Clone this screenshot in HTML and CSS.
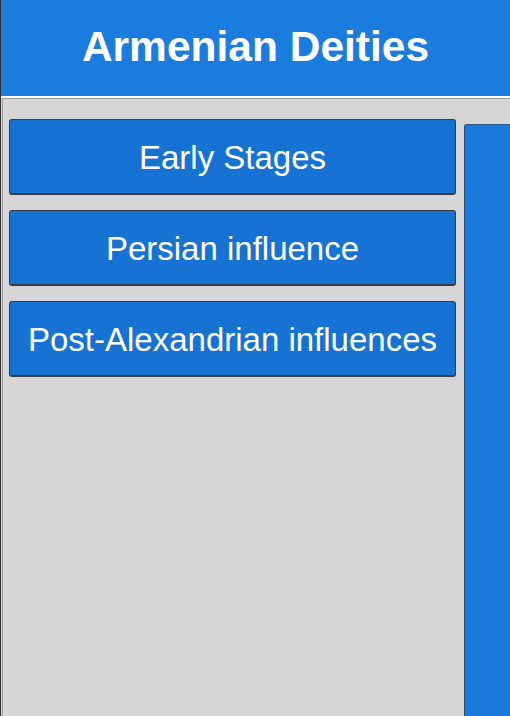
FILE: index.html
```html
<!DOCTYPE html>
<html>
<head>
<meta charset="utf-8">
<link rel="stylesheet" href="styles.css">
</head>
<body>
<div class="app">
  <header class="header"><h1 class="title">Armenian Deities</h1></header>
  <div class="sep"></div>
  <main class="panel">
    <nav class="menu">
      <button class="btn">Early Stages</button>
      <button class="btn">Persian influence</button>
      <button class="btn">Post-Alexandrian influences</button>
    </nav>
    <section class="content"></section>
  </main>
</div>
</body>
</html>
```
FILE: styles.css
```css
html, body { margin: 0; padding: 0; }
body { width: 510px; height: 716px; overflow: hidden; background: #d6d6d6; font-family: "Liberation Sans", Arial, sans-serif; }
.app { display: flex; flex-direction: column; height: 716px; border-left: 1px solid #2e2e2e; box-sizing: border-box; }
.header { height: 96px; background: #1a7cde; display: flex; align-items: center; justify-content: center; flex-shrink: 0; }
.title { margin: 0; color: #fff; font-size: 42.5px; font-weight: bold; line-height: 1; padding-bottom: 2px; }
.sep { height: 2px; background: #fff; flex-shrink: 0; }
.panel { flex: 1; display: flex; gap: 8px; background: #d6d6d6; border-top: 1px solid #9c9c9c; border-left: 1px solid #a0a0a0; margin-left: 1px; padding: 20px 0 0 6px; min-height: 0; }
.menu { width: 447px; display: flex; flex-direction: column; gap: 15px; flex-shrink: 0; }
.btn { height: 76px; background: #1673d4; color: #fff; border: 1px solid #3c3c3c; border-bottom-width: 2px; border-radius: 3px; font-family: "Liberation Sans", Arial, sans-serif; font-size: 33px; padding: 2px 0 0; text-align: center; box-sizing: border-box; }
.content { flex: 1; margin-top: 5px; background: #1979dd; border-top: 1px solid #2a5585; border-left: 1px solid #2a4a6e; border-top-left-radius: 3px; }
```
